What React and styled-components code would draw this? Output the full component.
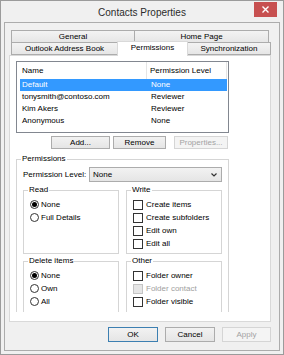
import React from "react";
import styled, { createGlobalStyle } from "styled-components";

const GlobalStyle = createGlobalStyle`
  body {
    margin: 0;
    background: #fff;
    font-family: "Liberation Sans", Arial, sans-serif;
    color: #000;
  }
`;

const Window = styled.div`
  width: 284px;
  height: 355px;
  box-sizing: border-box;
  border: 1px solid #9b9b9b;
  background: #f0f0f0;
  display: flex;
  flex-direction: column;
`;

const TitleBar = styled.div`
  height: 21px;
  display: grid;
  grid-template-columns: 1fr auto 1fr;
`;

const Title = styled.div`
  grid-column: 2;
  font-size: 10px;
  line-height: 12px;
  padding-top: 6px;
  color: #2b2b2b;
`;

const Close = styled.div`
  justify-self: end;
  align-self: start;
  width: 23px;
  height: 15px;
  margin-top: 1px;
  margin-right: 6px;
  background: #c75050;
  display: flex;
  align-items: center;
  justify-content: center;
`;

const Client = styled.div`
  margin: 0 0 3px 3px;
  width: 276px;
  height: 329px;
  box-sizing: border-box;
  border: 1px solid #acacac;
  padding-top: 7px;
  display: flex;
  flex-direction: column;
`;

const TabRow = styled.div`
  display: flex;
  padding-left: 6px;
  margin-top: ${(p) => (p.$front ? "-1px" : "0")};
  position: relative;
  z-index: ${(p) => (p.$front ? 2 : 0)};
`;

const Tab = styled.div`
  box-sizing: border-box;
  width: ${(p) => p.$w}px;
  height: ${(p) => (p.$active ? "15px" : "13px")};
  margin-top: ${(p) => (p.$active ? "-1px" : "0")};
  margin-bottom: ${(p) => (p.$active ? "-2px" : "0")};
  border: 1px solid ${(p) => (p.$active ? "#d9d9d9" : "#acacac")};
  border-bottom: ${(p) => (p.$active ? "none" : "1px solid #acacac")};
  background: ${(p) => (p.$active ? "#fff" : "linear-gradient(#f3f3f3, #e6e6e6)")};
  font-size: 8px;
  line-height: ${(p) => (p.$active ? "12px" : "11px")};
  text-align: center;
  white-space: nowrap;
  position: relative;
  z-index: ${(p) => (p.$active ? 1 : 0)};

  & + & {
    margin-left: -1px;
  }
`;

const Panel = styled.div`
  margin-left: 4px;
  width: 262px;
  height: 267px;
  box-sizing: border-box;
  border: 1px solid #d9d9d9;
  background: #fff;
  padding: 5px 0 0 6px;
`;

const ListBox = styled.div`
  width: 213px;
  height: 72px;
  box-sizing: border-box;
  border: 1px solid #828790;
  font-size: 8px;
`;

const Header = styled.div`
  display: grid;
  grid-template-columns: 130px 80px;
  height: 17px;
  line-height: 17px;
`;

const HeadCell = styled.div`
  padding-left: ${(p) => (p.$first ? "5px" : "3px")};
  border-right: 1px solid #e5e5e5;
`;

const Row = styled.div`
  display: grid;
  grid-template-columns: 131px 1fr;
  margin-left: 3px;
  width: 207px;
  height: 12px;
  line-height: 12px;
  background: ${(p) => (p.$sel ? "#3399ff" : "transparent")};
  color: ${(p) => (p.$sel ? "#fff" : "#000")};
`;

const Cell = styled.div`
  padding-left: ${(p) => (p.$first ? "2px" : "0")};
  white-space: nowrap;
`;

const ButtonRow = styled.div`
  width: 213px;
  display: flex;
  justify-content: flex-end;
  margin-top: 3px;
  padding-right: 1px;
  box-sizing: border-box;
`;

const Button = styled.div`
  box-sizing: border-box;
  width: ${(p) => p.$w}px;
  height: ${(p) => p.$h || 13}px;
  margin-left: ${(p) => p.$ml || 0}px;
  border: 1px solid
    ${(p) => (p.$default ? "#3c7fb1" : p.$disabled ? "#d5d5d5" : "#acacac")};
  background: ${(p) =>
    p.$disabled ? "#f4f4f4" : "linear-gradient(#f2f2f2, #e5e5e5)"};
  color: ${(p) => (p.$disabled ? "#a3a3a3" : "#000")};
  font-size: 8px;
  display: flex;
  align-items: center;
  justify-content: center;
`;

const Perms = styled.fieldset`
  width: 213px;
  height: 158px;
  box-sizing: border-box;
  margin: 5px 0 0 0;
  padding: 0 6px;
  min-width: 0;
  border: 1px solid #d5d5d5;
  border-bottom: none;
  overflow: hidden;
`;

const Legend = styled.legend`
  font-size: 8px;
  line-height: 10px;
  padding: 0 1px;
  margin-left: -2px;
`;

const LevelRow = styled.div`
  display: flex;
  align-items: center;
  margin-top: 3px;
  height: 15px;
  font-size: 8px;
`;

const LevelLabel = styled.div`
  width: 66px;
`;

const Select = styled.div`
  box-sizing: border-box;
  width: 133px;
  height: 15px;
  border: 1px solid #acacac;
  background: linear-gradient(#f2f2f2, #e5e5e5);
  display: flex;
  align-items: center;
  justify-content: space-between;
  padding: 0 4px 0 3px;
`;

const GroupRow = styled.div`
  display: flex;
  gap: 7px;
  margin-top: ${(p) => p.$mt}px;
`;

const Group = styled.fieldset`
  width: 96px;
  height: ${(p) => p.$h}px;
  box-sizing: border-box;
  margin: 0;
  padding: 3px 4px 0 6px;
  min-width: 0;
  border: 1px solid #d5d5d5;
  border-bottom: ${(p) => (p.$open ? "none" : "1px solid #d5d5d5")};
`;

const Item = styled.div`
  display: flex;
  align-items: center;
  height: 13px;
  font-size: 8px;
  white-space: nowrap;
  color: ${(p) => (p.$disabled ? "#a0a0a0" : "#000")};
`;

const Radio = styled.span`
  width: 9px;
  height: 9px;
  box-sizing: border-box;
  border: 1px solid #333;
  border-radius: 50%;
  background: #fff;
  margin-right: 2px;
  display: flex;
  align-items: center;
  justify-content: center;

  &::after {
    content: "";
    width: 5px;
    height: 5px;
    border-radius: 50%;
    background: ${(p) => (p.$on ? "#000" : "transparent")};
  }
`;

const Check = styled.span`
  width: 10px;
  height: 10px;
  box-sizing: border-box;
  border: 1px solid ${(p) => (p.$disabled ? "#c4c4c4" : "#333")};
  background: ${(p) => (p.$disabled ? "#e6e6e6" : "#fff")};
  margin-right: 3px;
`;

const BottomBar = styled.div`
  display: flex;
  justify-content: flex-end;
  gap: 7px;
  margin-top: 5px;
  padding-right: 8px;
`;

const Chevron = () => (
  <svg width="6" height="4" viewBox="0 0 6 4">
    <path d="M0.5 0.5 L3 3 L5.5 0.5" fill="none" stroke="#333" strokeWidth="1.2" />
  </svg>
);

const people = [
  ["Default", "None", true],
  ["tonysmith@contoso.com", "Reviewer"],
  ["Kim Akers", "Reviewer"],
  ["Anonymous", "None"],
];

const App = () => {
  return (
    <>
      <GlobalStyle />
      <Window>
        <TitleBar>
          <Title>Contacts Properties</Title>
          <Close>
            <svg width="7" height="7" viewBox="0 0 7 7">
              <path d="M0.5 0.5 L6.5 6.5 M6.5 0.5 L0.5 6.5" stroke="#fff" strokeWidth="1.4" />
            </svg>
          </Close>
        </TitleBar>
        <Client>
          <TabRow>
            <Tab $w={124}>General</Tab>
            <Tab $w={135}>Home Page</Tab>
          </TabRow>
          <TabRow $front>
            <Tab $w={107}>Outlook Address Book</Tab>
            <Tab $w={71} $active>Permissions</Tab>
            <Tab $w={84}>Synchronization</Tab>
          </TabRow>
          <Panel>
            <ListBox>
              <Header>
                <HeadCell $first>Name</HeadCell>
                <HeadCell>Permission Level</HeadCell>
              </Header>
              {people.map(([name, level, sel]) => (
                <Row key={name} $sel={sel}>
                  <Cell $first>{name}</Cell>
                  <Cell>{level}</Cell>
                </Row>
              ))}
            </ListBox>
            <ButtonRow>
              <Button $w={59}>Add...</Button>
              <Button $w={53} $ml={3}>Remove</Button>
              <Button $w={54} $ml={8} $disabled>Properties...</Button>
            </ButtonRow>
            <Perms>
              <Legend>Permissions</Legend>
              <LevelRow>
                <LevelLabel>Permission Level:</LevelLabel>
                <Select>
                  <span>None</span>
                  <Chevron />
                </Select>
              </LevelRow>
              <GroupRow $mt={3}>
                <Group $h={69}>
                  <Legend>Read</Legend>
                  <Item><Radio $on />None</Item>
                  <Item><Radio />Full Details</Item>
                </Group>
                <Group $h={69}>
                  <Legend>Write</Legend>
                  <Item><Check />Create items</Item>
                  <Item><Check />Create subfolders</Item>
                  <Item><Check />Edit own</Item>
                  <Item><Check />Edit all</Item>
                </Group>
              </GroupRow>
              <GroupRow $mt={2}>
                <Group $h={60} $open>
                  <Legend>Delete items</Legend>
                  <Item><Radio $on />None</Item>
                  <Item><Radio />Own</Item>
                  <Item><Radio />All</Item>
                </Group>
                <Group $h={60} $open>
                  <Legend>Other</Legend>
                  <Item><Check />Folder owner</Item>
                  <Item $disabled><Check $disabled />Folder contact</Item>
                  <Item><Check />Folder visible</Item>
                </Group>
              </GroupRow>
            </Perms>
          </Panel>
          <BottomBar>
            <Button $w={50} $h={15} $default>OK</Button>
            <Button $w={50} $h={15}>Cancel</Button>
            <Button $w={49} $h={15} $disabled>Apply</Button>
          </BottomBar>
        </Client>
      </Window>
    </>
  );
};

export default App;
